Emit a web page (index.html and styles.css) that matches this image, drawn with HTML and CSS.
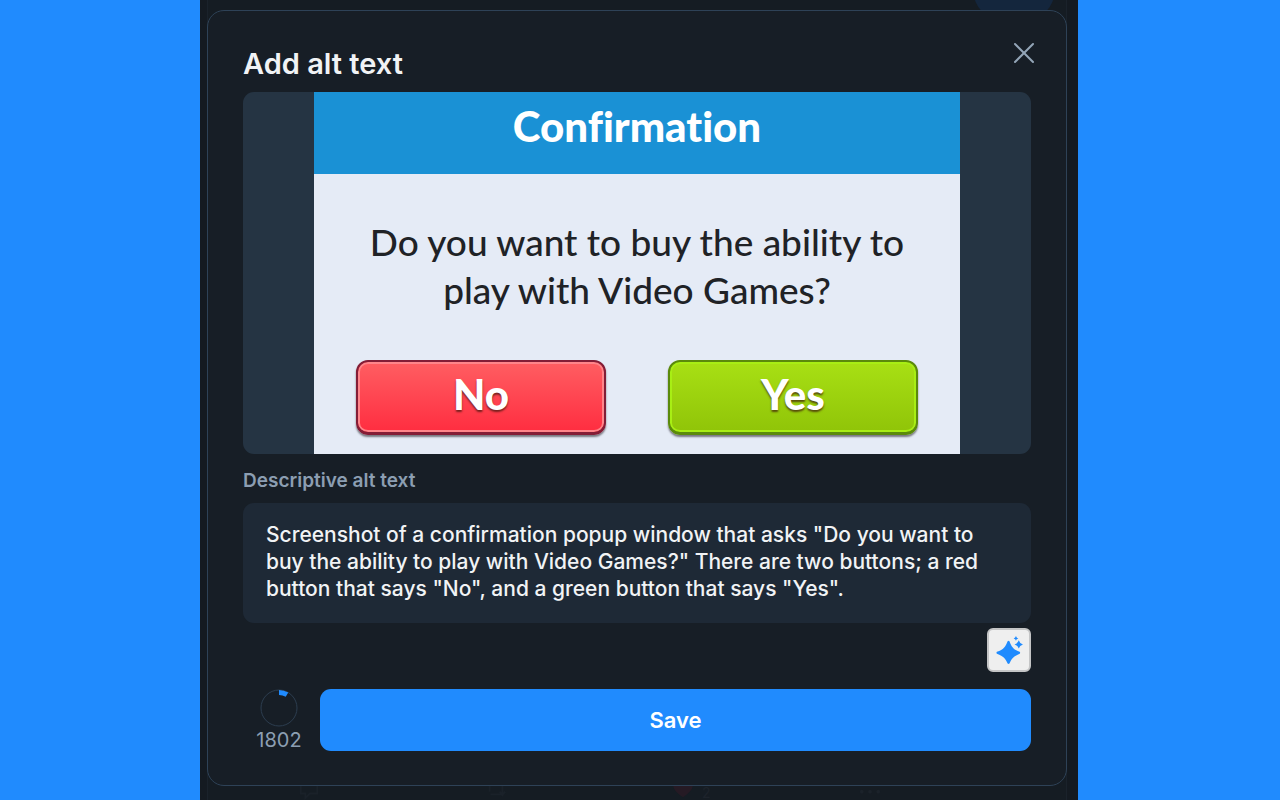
FILE: index.html
```html
<!DOCTYPE html>
<html lang="en">
<head>
<meta charset="utf-8">
<meta name="viewport" content="width=device-width, initial-scale=1">
<title>Add alt text</title>
<link rel="stylesheet" href="styles.css">
</head>
<body>
<div class="app">
  <div class="feed" aria-hidden="true">
    <div class="feed-column">
      <div class="feed-pill"></div>
      <div class="feed-actions">
        <svg class="feed-icon" viewBox="0 0 24 24"><path d="M3 1h18v17h-8l-5 5v-5H3z"/></svg>
        <svg class="feed-icon" viewBox="0 0 24 24"><path d="M5 16V5h13M2 8l3-4 3 4M19 8v11H6M16 16l3 4 3-4"/></svg>
        <span class="feed-likes">
          <svg class="feed-heart" viewBox="0 0 24 24"><path d="M12 22C4 17 1 12 1 7c0-6 8-8 11-3 3-5 11-3 11 3 0 5-3 10-11 15z"/></svg>
          2
        </span>
        <svg class="feed-dots" viewBox="0 0 24 24"><circle cx="3" cy="16" r="2"/><circle cx="12" cy="16" r="2"/><circle cx="21" cy="16" r="2"/></svg>
      </div>
    </div>
  </div>

  <main class="dialog" role="dialog" aria-labelledby="dialog-title">
    <header class="dialog-header">
      <h1 class="dialog-title" id="dialog-title">Add alt text</h1>
      <button class="close" type="button" aria-label="Close">
        <svg class="close-icon" viewBox="0 0 20 20"><path d="M1 1l18 18M19 1L1 19"/></svg>
      </button>
    </header>

    <div class="preview">
      <div class="popup">
        <div class="popup-title">Confirmation</div>
        <div class="popup-body">
          <p class="popup-question">Do you want to buy the ability to<br>play with Video Games?</p>
          <div class="popup-choices">
            <button class="choice choice-no" type="button">No</button>
            <button class="choice choice-yes" type="button">Yes</button>
          </div>
        </div>
      </div>
    </div>

    <label class="field-label" for="alt-text">Descriptive alt text</label>
    <textarea class="field" id="alt-text" rows="3" spellcheck="false">Screenshot of a confirmation popup window that asks "Do you want to buy the ability to play with Video Games?" There are two buttons; a red button that says "No", and a green button that says "Yes".</textarea>

    <div class="tools">
      <button class="generate" type="button" aria-label="Generate alt text">
        <svg class="generate-icon" viewBox="0 0 28 28">
          <path d="M12.500 4.500Q13.500 3.500 14.500 4.500C17 11 18.500 13 25.500 16Q26.500 17 25.500 18C18.500 21 17 23 14.500 28.500Q13.500 29.500 12.500 28.500C10 23 8.500 21 1 18Q0 17 1 16C8.500 13 10 11 12.500 4.500z"/>
          <path d="M24.500 3.500Q25.500 7 29 8Q25.500 9 24.500 12.500Q23.500 9 20 8Q23.500 7 24.500 3.500z"/>
          <path d="M21.500 -1Q22 1 24 1.500Q22 2 21.500 4Q21 2 19 1.500Q21 1 21.500 -1z"/>
        </svg>
      </button>
    </div>

    <footer class="dialog-footer">
      <div class="counter">
        <svg class="counter-ring" viewBox="0 0 38 38">
          <circle class="ring-track" cx="19" cy="19" r="18"/>
          <path class="ring-value" d="M19 3.500A15.500 15.500 0 0 1 27 5.700"/>
        </svg>
        <span>1802</span>
      </div>
      <button class="save" type="button">Save</button>
    </footer>
  </main>
</div>
</body>
</html>
```
FILE: styles.css
```css
* {
  box-sizing: border-box;
}

body {
  margin: 0;
  padding: 0 202px 0 200px;
  background: #208bfe;
  font-family: Inter, "Liberation Sans", sans-serif;
  color: #f1f3f5;
}

button {
  padding: 0;
  border: 0;
  font-family: inherit;
  cursor: pointer;
}

svg {
  display: block;
  overflow: visible;
}

.app {
  position: relative;
  display: flex;
  min-height: 100vh;
  padding: 10px 11px 14px 7px;
  overflow: hidden;
  background: #141a21;
}

/* Dimmed page that stays behind the dialog */
.feed {
  position: absolute;
  inset: 0;
  padding: 0 11px 0 7px;
}

.feed-column {
  position: relative;
  height: 100%;
  border: solid #1a222b;
  border-width: 0 1px;
  background: #151c23;
}

.feed-pill {
  position: absolute;
  top: -32px;
  right: 12px;
  width: 80px;
  height: 50px;
  border-radius: 25px;
  background: #14263d;
}

.feed-actions {
  position: absolute;
  right: 20px;
  bottom: 1px;
  left: 90px;
  display: grid;
  grid-template-columns: repeat(4, 1fr);
  align-items: end;
  color: #1d232b;
  font-size: 14px;
  line-height: 12px;
}

.feed-icon,
.feed-heart,
.feed-dots {
  width: 22px;
  height: 22px;
}

.feed-icon {
  fill: none;
  stroke: #1a2129;
  stroke-width: 2;
}

.feed-likes {
  display: flex;
  align-items: flex-end;
  gap: 8px;
}

.feed-heart {
  fill: #251a24;
}

.feed-dots {
  fill: #1b222a;
}

.dialog {
  position: relative;
  display: flex;
  flex: 1;
  flex-direction: column;
  padding: 30px 35px 32px;
  border: 1px solid #2e4257;
  border-radius: 17px;
  background: #171e26;
}

.dialog-header {
  display: flex;
  align-items: flex-start;
  justify-content: space-between;
  height: 51px;
}

.dialog-title {
  margin: 5px 0 0;
  font-size: 29px;
  font-weight: 600;
  line-height: 36px;
}

.close {
  padding: 3px;
  margin: -1px -6px 0 0;
  background: none;
}

.close-icon {
  width: 20px;
  height: 20px;
  fill: none;
  stroke: #93a5b7;
  stroke-width: 2;
  stroke-linecap: round;
}

.preview {
  display: flex;
  flex: 1;
  justify-content: center;
  padding: 0 71px;
  overflow: hidden;
  border-radius: 11px;
  background: #253443;
}

.popup {
  display: flex;
  flex: 1;
  flex-direction: column;
  font-family: Lato, sans-serif;
  font-variant-ligatures: none;
}

.popup-title {
  height: 82px;
  padding-top: 10px;
  background: #1a91d5;
  color: #fff;
  font-size: 42px;
  font-weight: 900;
  line-height: 48px;
  text-align: center;
}

.popup-body {
  display: flex;
  flex: 1;
  flex-direction: column;
  padding: 44px 42px 19px;
  background: #e5ebf6;
}

.popup-question {
  margin: 0;
  color: #202226;
  font-family: "Lato Medium", Lato, sans-serif;
  font-size: 37px;
  font-weight: 500;
  line-height: 48px;
  text-align: center;
  white-space: nowrap;
}

.popup-choices {
  display: flex;
  gap: 62px;
  margin-top: auto;
}

.choice {
  flex: 1;
  height: 75px;
  padding-bottom: 6px;
  border: 2px solid;
  border-bottom-width: 3px;
  border-radius: 12px;
  color: #fff;
  font-size: 42px;
  font-weight: 900;
  text-shadow: 0 2px 2px rgba(60, 20, 10, 0.7);
}

.choice-no {
  border-color: #841d36;
  background: linear-gradient(#ff5e62, #ff2d40);
  box-shadow: inset 0 0 0 2px #ff858a, 0 2px 2px #77777f;
}

.choice-yes {
  border-color: #5b8a0b;
  background: linear-gradient(#a8e014, #90c408);
  box-shadow: inset 0 0 0 2px #a8ee14, 0 2px 2px #77777f;
}

.field-label {
  margin-top: 15px;
  color: #8c9eb2;
  font-size: 19px;
  font-weight: 600;
  line-height: 24px;
}

.field {
  display: block;
  width: 100%;
  height: 120px;
  margin: 10px 0 0;
  padding: 18px 23px;
  border: 0;
  border-radius: 11px;
  outline: none;
  resize: none;
  overflow: hidden;
  background: #1e2936;
  color: #f1f3f5;
  font-family: inherit;
  font-size: 21px;
  font-weight: 500;
  line-height: 27px;
}

.tools {
  display: flex;
  justify-content: flex-end;
  margin-top: 5px;
}

.generate {
  display: grid;
  place-items: center;
  width: 44px;
  height: 44px;
  border: 2px solid #c4c5c6;
  border-radius: 6px;
  background: #efefef;
}

.generate-icon {
  width: 26px;
  height: 26px;
  fill: #208bfe;
}

.dialog-footer {
  display: flex;
  align-items: flex-start;
  gap: 17px;
  margin-top: 17px;
}

.counter {
  display: flex;
  flex-direction: column;
  align-items: center;
  width: 60px;
  padding-left: 12px;
  color: #8c9eb2;
  font-size: 20px;
  line-height: 26px;
}

.counter-ring {
  width: 38px;
  height: 38px;
  fill: none;
}

.ring-track {
  stroke: #2c3d4f;
  stroke-width: 1;
}

.ring-value {
  stroke: #208bfe;
  stroke-width: 5;
}

.save {
  flex: 1;
  height: 62px;
  border-radius: 11px;
  background: #208bfe;
  color: #fff;
  font-size: 22px;
  font-weight: 600;
}
```
